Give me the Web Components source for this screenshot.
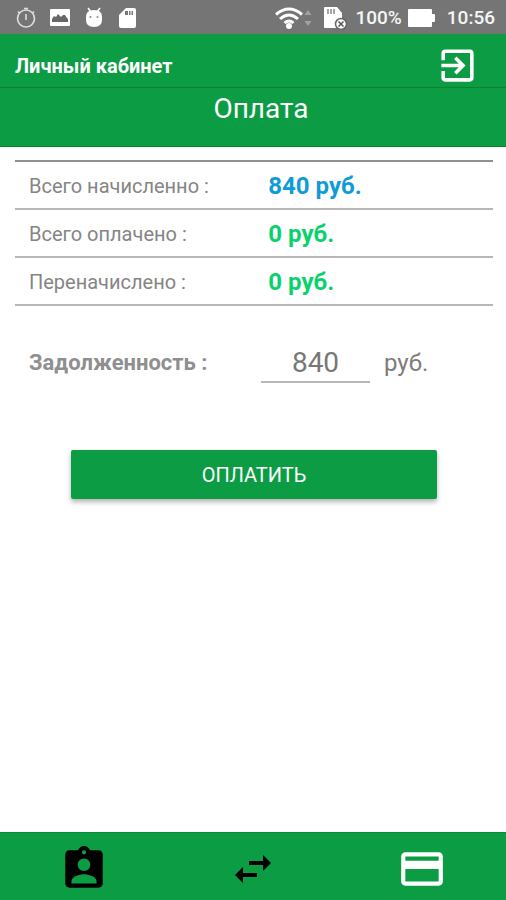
<!DOCTYPE html>
<html lang="ru">
<head>
<meta charset="utf-8">
<meta name="viewport" content="width=device-width, initial-scale=1">
<title>Личный кабинет</title>
<style>
  html, body { height: 100%; margin: 0; }
  body {
    --green: #0b9c44;
    --muted: #858585;
    background: #fff;
    font-family: Roboto, "Liberation Sans", sans-serif;
  }
</style>
</head>
<body>
<cabinet-app>
  <status-bar slot="top"></status-bar>
  <app-header slot="top">Личный кабинет</app-header>
  <page-title slot="top">Оплата</page-title>
  <charge-table></charge-table>
  <debt-form amount="840">Задолженность :</debt-form>
  <tab-bar slot="bottom"></tab-bar>
</cabinet-app>

<script>
function define(name, html) {
  const template = document.createElement('template');
  template.innerHTML = html;
  customElements.define(name, class extends HTMLElement {
    constructor() {
      super();
      this.attachShadow({ mode: 'open' }).append(template.content.cloneNode(true));
    }
  });
}

define('cabinet-app', `
  <style>
    :host { display: flex; flex-direction: column; min-height: 100%; }
    main { flex: 1; padding: 13px 13px 14px 15px; }
  </style>
  <slot name="top"></slot>
  <main><slot></slot></main>
  <slot name="bottom"></slot>
`);

define('status-bar', `
  <style>
    :host {
      display: flex; align-items: center; justify-content: space-between;
      height: 34px; padding: 2px 11px 0 15px; box-sizing: border-box;
      background: #757575; color: #f5f5f5;
      font-size: 19px; line-height: 24px; font-weight: 500;
    }
    div { display: flex; align-items: center; }
    .notes { gap: 12px; }
    svg { display: block; }
    .sim { margin: 0 8px 0 10px; }
    .battery { margin: 0 11px 0 6px; }
  </style>
  <div class="notes">
    <svg width="22" height="22" viewBox="0 0 22 22" fill="none" stroke="#dedede" stroke-width="1.6">
      <circle cx="11" cy="11.5" r="8.5"/><path d="M11 7v6M9 1.5h4M3 4.500l2 2M19 4.500l-2 2"/>
    </svg>
    <svg width="22" height="20" viewBox="0 0 22 20">
      <path fill="#fff" d="M2 1h18q1 0 1 1v15q0 1-1 1H2q-1 0-1-1V2q0-1 1-1z"/>
      <path fill="#686868" d="M3 14v-3l2-3 2 1 2-3 3 3 2-2h2l2 3 1 1v3z"/>
    </svg>
    <svg width="22" height="22" viewBox="0 0 22 22">
      <path d="M5 1l3 4M17 1l-3 4" stroke="#fff" stroke-width="1.5"/>
      <path fill="#fff" d="M3 10q0-7 8-7t8 7v3q0 7-8 7t-8-7z"/>
      <circle cx="7.5" cy="10" r="1" fill="#888"/><circle cx="14.5" cy="10" r="1" fill="#888"/>
    </svg>
    <svg width="22" height="22" viewBox="0 0 22 22">
      <path fill="#fff" d="M9 1h8q2 0 2 2v16q0 2-2 2H4q-2 0-2-2V8z"/>
      <path fill="#777" d="M8 4h3v4H8zM12 4h1.500v4H12zM14.500 4H16v4h-1.500z"/>
    </svg>
  </div>
  <div>
    <svg width="28" height="24" viewBox="0 0 28 24" fill="none" stroke="#fff" stroke-width="3">
      <path d="M1 8.500q13-11 26 0M5 13q9-8 18 0M9.500 17q4.500-4 9 0"/>
      <circle cx="14" cy="20" r="3" fill="#fff" stroke="none"/>
    </svg>
    <svg width="10" height="18" viewBox="0 0 10 18" fill="#a2a2a2"><path d="M5 1l3.500 5h-7zM5 17l-3.500-5h7z"/></svg>
    <svg class="sim" width="24" height="24" viewBox="0 0 24 24">
      <path fill="#fff" d="M2 1h12l5 6v14q0 1-1 1H2q-1 0-1-1V2q0-1 1-1z"/>
      <path stroke="#888" stroke-width="1.5" d="M5 3v5M8 3v5M11 3v5"/>
      <circle cx="18" cy="18" r="5.5" fill="#fff" stroke="#666" stroke-width="1.5"/>
      <path d="M15.500 15.500l5 5M20.500 15.500l-5 5" stroke="#555" stroke-width="1.5"/>
    </svg>
    <span>100%</span>
    <svg class="battery" width="28" height="18" viewBox="0 0 28 18">
      <path fill="#fff" d="M1 0h22q1 0 1 1v4h2q1 0 1 1v6q0 1-1 1h-2v4q0 1-1 1H1q-1 0-1-1V1q0-1 1-1z"/>
    </svg>
    <time>10:56</time>
  </div>
`);

define('app-header', `
  <style>
    :host {
      display: flex; align-items: center; justify-content: space-between;
      height: 54px; box-sizing: border-box; padding: 10px 27px 0 15px;
      border-bottom: 1px solid #098525;
      background: var(--green); color: #fff;
    }
    h1 { margin: 0; font-size: 20px; line-height: 24px; font-weight: 700; }
    button { padding: 0; border: 0; background: none; color: inherit; cursor: pointer; }
    svg { display: block; }
  </style>
  <h1><slot></slot></h1>
  <button aria-label="Выйти">
    <svg width="43" height="43" viewBox="0 0 24 24" fill="currentColor">
      <path d="M10.090 15.590L11.500 17l5-5-5-5-1.410 1.410L12.670 11H3v2h9.670l-2.580 2.590zM19 3H5c-1.110 0-2 .9-2 2v4h2V5h14v14H5v-4H3v4c0 1.100.89 2 2 2h14c1.100 0 2-.9 2-2V5c0-1.100-.9-2-2-2z"/>
    </svg>
  </button>
`);

define('page-title', `
  <style>
    :host {
      display: block; height: 59px; box-sizing: border-box; padding: 4px 0 0 16px;
      border-bottom: 1px solid #098525;
      background: var(--green); color: #fff; text-align: center;
    }
    h2 { margin: 0; font-size: 28px; line-height: 34px; font-weight: 400; }
  </style>
  <h2><slot></slot></h2>
`);

define('charge-table', `
  <style>
    :host { display: block; }
    table { width: 100%; border-collapse: collapse; table-layout: fixed; }
    tr { height: 48px; border-bottom: 2px solid #b8b8b8; }
    tr:first-child { border-top: 2px solid #909090; }
    th { width: 53%; padding: 2px 0 0 14px; box-sizing: border-box; text-align: left; font-size: 20px; line-height: 24px; font-weight: 400; color: var(--muted); }
    td { padding: 2px 0 0; font-size: 24px; line-height: 28px; font-weight: 700; color: #08d26c; }
    .total { color: #109bd7; }
  </style>
  <table>
    <tr><th scope="row">Всего начисленно :</th><td class="total">840 руб.</td></tr>
    <tr><th scope="row">Всего оплачено :</th><td>0 руб.</td></tr>
    <tr><th scope="row">Переначислено :</th><td>0 руб.</td></tr>
  </table>
`);

const debtForm = document.createElement('template');
debtForm.innerHTML = `
  <style>
    :host { display: block; margin-top: 37px; }
    .row { display: flex; align-items: center; padding-left: 14px; }
    label { width: 232px; font-size: 22px; line-height: 28px; font-weight: 700; color: #8f8f8f; }
    input {
      width: 109px; height: 40px; box-sizing: border-box; padding: 0;
      border: 0; border-bottom: 2px solid #b8b8b8; border-radius: 0; background: none;
      font: 400 28px/32px Roboto, sans-serif; color: #777; text-align: center; outline: 0;
    }
    .unit { margin-left: 14px; font-size: 24px; line-height: 28px; color: #7c7c7c; }
    button {
      display: block; width: calc(100% - 112px); height: 49px; margin: 67px 56px 0;
      border: 0; border-radius: 2px; background: var(--green); color: #fff;
      font: 400 20px/24px Roboto, sans-serif; cursor: pointer;
      box-shadow: 0 3px 5px rgba(0, 0, 0, .3);
    }
  </style>
  <form>
    <div class="row">
      <label for="sum"><slot></slot></label>
      <input id="sum" inputmode="numeric">
      <span class="unit">руб.</span>
    </div>
    <button type="button">ОПЛАТИТЬ</button>
  </form>
`;

class DebtForm extends HTMLElement {
  constructor() {
    super();
    const root = this.attachShadow({ mode: 'open' });
    root.append(debtForm.content.cloneNode(true));
    root.querySelector('input').value = this.getAttribute('amount') || '';
  }
}
customElements.define('debt-form', DebtForm);

// full-height column, so the tab bar stays at the bottom of the window
document.querySelector('cabinet-app').style.height = '100%';

define('tab-bar', `
  <style>
    :host { display: block; background: var(--green); border-top: 1px solid #098c38; }
    nav { display: grid; grid-template-columns: repeat(3, 1fr); height: 67px; }
    a { display: flex; align-items: center; justify-content: center; padding-top: 4px; color: #000; }
    a[aria-current] { color: #fff; }
  </style>
  <nav>
    <a href="#profile" aria-label="Профиль">
      <svg width="50" height="50" viewBox="0 0 24 24" fill="currentColor"><path d="M19 3h-4.180C14.400 1.840 13.300 1 12 1c-1.300 0-2.400.84-2.820 2H5c-1.100 0-2 .9-2 2v14c0 1.100.9 2 2 2h14c1.100 0 2-.9 2-2V5c0-1.100-.9-2-2-2zm-7 0c.55 0 1 .45 1 1s-.45 1-1 1-1-.45-1-1 .45-1 1-1zm0 4c1.660 0 3 1.340 3 3s-1.340 3-3 3-3-1.340-3-3 1.340-3 3-3zm6 12H6v-1.400c0-2 4-3.100 6-3.100s6 1.100 6 3.100V19z"/></svg>
    </a>
    <a href="#transfers" aria-label="Переводы">
      <svg width="48" height="48" viewBox="0 0 24 24" fill="currentColor"><path d="M6.990 11L3 15l3.990 4v-3H14v-2H6.990v-3zM21 9l-3.990-4v3H10v2h7.010v3L21 9z"/></svg>
    </a>
    <a href="#payment" aria-label="Оплата" aria-current="page">
      <svg width="50" height="50" viewBox="0 0 24 24" fill="currentColor"><path d="M20 4H4c-1.110 0-1.990.89-1.990 2L2 18c0 1.110.89 2 2 2h16c1.110 0 2-.89 2-2V6c0-1.110-.89-2-2-2zm0 14H4v-6h16v6zm0-10H4V6h16v2z"/></svg>
    </a>
  </nav>
`);
</script>
</body>
</html>
